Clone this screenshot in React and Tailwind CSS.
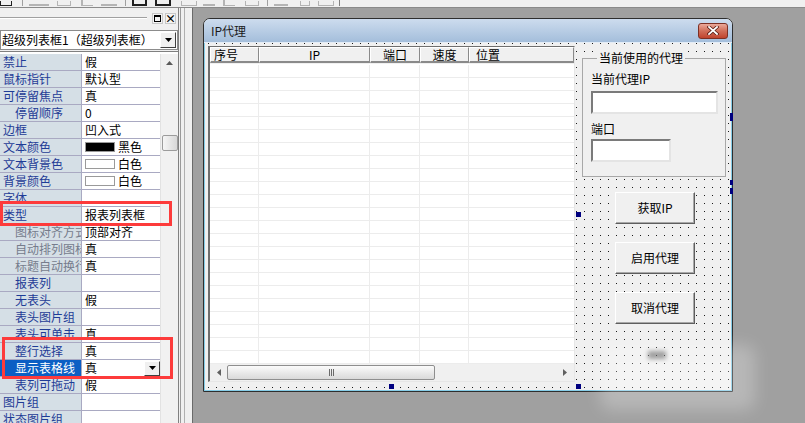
import React from 'react';

const TOOL_MARKS = [
  'ml-0 w-[12px] h-[5px] border-x border-b border-[#202020]',
  'ml-[10px] w-px h-[7px] bg-[#a0a0a0]',
  'ml-[6px] w-[20px] h-[4px] border-b-2 border-[#b4b4b4]',
  'ml-[8px] w-[14px] h-[5px] border-x border-b border-[#b4b4b4]',
  'ml-[10px] w-[12px] h-[6px] border-l-2 border-b border-[#b4b4b4]',
  'ml-[8px] w-[16px] h-[4px] border-b-2 border-[#b4b4b4]',
  'ml-[8px] w-px h-[7px] bg-[#a0a0a0]',
  'ml-[6px] w-[15px] h-[6px] border-x-2 border-b-2 border-[#202020]',
  'ml-[8px] w-[16px] h-[6px] border-x-2 border-b-2 border-[#202020]',
  'ml-[10px] w-[16px] h-[5px] border-x border-b border-[#b4b4b4]',
  'ml-[6px] w-[12px] h-[4px] border-b-2 border-[#b4b4b4]',
  'ml-[8px] w-[12px] h-[6px] border-l-2 border-b border-[#b4b4b4]',
  'ml-[10px] w-[14px] h-[5px] border-x border-b border-[#b4b4b4]',
  'ml-[8px] w-px h-[7px] bg-[#a0a0a0]',
  'ml-[6px] w-[14px] h-[3px] border-b-2 border-[#b4b4b4]',
  'ml-[12px] w-[10px] h-[5px] border-x border-b border-[#b4b4b4]',
  'ml-[8px] w-[16px] h-[5px] border-x border-b border-[#b4b4b4]',
  'ml-[5px] w-px h-[7px] bg-[#808080]',
];

const PROPS = [
  { name: '禁止', value: '假' },
  { name: '鼠标指针', value: '默认型' },
  { name: '可停留焦点', value: '真' },
  { name: '停留顺序', value: '0', sub: true },
  { name: '边框', value: '凹入式' },
  { name: '文本颜色', value: '黑色', swatch: 'bg-black' },
  { name: '文本背景色', value: '白色', swatch: 'bg-white' },
  { name: '背景颜色', value: '白色', swatch: 'bg-white' },
  { name: '字体', value: '' },
  { name: '类型', value: '报表列表框' },
  { name: '图标对齐方式', value: '顶部对齐', sub: true, dim: true },
  { name: '自动排列图标', value: '真', sub: true, dim: true },
  { name: '标题自动换行', value: '真', sub: true, dim: true },
  { name: '报表列', value: '', sub: true },
  { name: '无表头', value: '假', sub: true },
  { name: '表头图片组', value: '', sub: true },
  { name: '表头可单击', value: '真', sub: true },
  { name: '整行选择', value: '真', sub: true },
  { name: '显示表格线', value: '真', sub: true, selected: true },
  { name: '表列可拖动', value: '假', sub: true },
  { name: '图片组', value: '' },
  { name: '状态图片组', value: '' },
];

const COLS = [
  { label: '序号', cls: 'w-[49px] justify-start pl-[3px]' },
  { label: 'IP', cls: 'w-[111px] justify-center' },
  { label: '端口', cls: 'w-[50px] justify-center' },
  { label: '速度', cls: 'w-[49px] justify-center' },
  { label: '位置', cls: 'flex-1 justify-start pl-[6px]' },
];

const ROWS = Array.from({ length: 23 }, (_, i) => i);

const DownTri = () => (
  <svg width="7" height="4" viewBox="0 0 7 4">
    <path d="M0 0 L7 0 L3.5 4 Z" fill="#000" />
  </svg>
);

const DropBtn = ({ className = '' }) => (
  <div
    className={`flex items-center justify-center bg-[#f0f0f0] border border-t-white border-l-white border-r-[#404040] border-b-[#404040] ${className}`}
  >
    <DownTri />
  </div>
);

const Toolbar = () => (
  <div className="flex items-end h-[8px] border-b border-[#8a8a8a] bg-[#f0f0f0] pb-[1px]">
    {TOOL_MARKS.map((c, i) => (
      <div key={i} className={`shrink-0 ${c}`} />
    ))}
  </div>
);

const PropRow = ({ p }) => (
  <div className="flex h-[17px] border-b border-[#a9a9c2]">
    <div
      className={`w-[82px] shrink-0 overflow-hidden whitespace-nowrap border-r border-[#a9a9c2] leading-[16px] ${
        p.sub ? 'pl-[15px]' : 'pl-[3px]'
      } ${p.selected ? 'bg-[#0b5fc4] text-white' : 'bg-[#d5dfe6]'} ${
        p.selected ? '' : p.dim ? 'text-[#767c8c]' : 'text-[#1f3c96]'
      }`}
    >
      {p.name}
    </div>
    <div className="flex-1 flex items-center pl-[3px] bg-white leading-[16px] overflow-hidden whitespace-nowrap">
      {p.swatch && <span className={`w-[30px] h-[10px] mr-[3px] border border-[#9a9a9a] ${p.swatch}`} />}
      <span>{p.value}</span>
      {p.selected && <DropBtn className="ml-auto w-[16px] h-[15px]" />}
    </div>
  </div>
);

const PropertyPanel = () => (
  <div className="w-[179px] shrink-0 flex flex-col border-r border-[#808080]">
    <div className="h-[20px] flex items-center pr-[2px]">
      <div className="flex-1 h-[2px] border-t border-[#a0a0a0] border-b border-b-white mr-[5px]" />
      <div className="w-[11px] h-[11px] flex items-center justify-center border border-[#c8c8c8] bg-[#f4f4f4]">
        <div className="w-[7px] h-[7px] border border-black border-t-2" />
      </div>
      <div className="w-[11px] h-[11px] ml-[2px] flex items-center justify-center border border-[#c8c8c8] bg-[#f4f4f4] font-bold text-[11px] leading-none">
        ×
      </div>
    </div>
    <div className="mt-[2px] h-[20px] flex items-center bg-white border border-[#8c8c8c] pl-[1px]">
      <span className="whitespace-nowrap">超级列表框1（超级列表框）</span>
      <DropBtn className="ml-auto mr-[1px] w-[16px] h-[16px]" />
    </div>
    <div className="mt-px flex flex-1 min-h-0 border-t border-[#808080] pt-[2px] bg-white overflow-hidden">
      <div className="w-[160px] shrink-0 flex flex-col">
        {PROPS.map((p) => (
          <PropRow key={p.name} p={p} />
        ))}
      </div>
      <div className="flex-1 flex flex-col items-center bg-[#f1f1f1] border-l border-[#e2e2e2]">
        <svg className="mt-[7px]" width="7" height="4" viewBox="0 0 7 4">
          <path d="M0 4 L3.5 0 L7 4 Z" fill="#5a5a5a" />
        </svg>
        <div className="mt-[70px] w-[16px] h-[16px] rounded-[2px] border border-[#9c9c9c] bg-gradient-to-r from-[#f6f6f6] to-[#d8d8d8]" />
      </div>
    </div>
  </div>
);

const TextBox = ({ className }) => (
  <div
    className={`h-[23px] bg-white border-2 border-t-[#7a7a7a] border-l-[#7a7a7a] border-b-[#e4e4e4] border-r-[#e4e4e4] ${className}`}
  />
);

const Button = ({ children }) => (
  <div className="w-[80px] h-[32px] flex items-center justify-center bg-[#f0f0f0] border border-t-white border-l-white border-r-[#5e5e5e] border-b-[#5e5e5e] shadow-[inset_-1px_-1px_0_#a8a8a8] text-[12px]">
    {children}
  </div>
);

const ListView = () => (
  <div className="mt-[3px] ml-[3px] w-[367px] h-[336px] shrink-0 flex flex-col bg-white border-t border-l-2 border-[#6e6e6e] border-r border-r-[#e6e6e6] border-b border-b-[#e6e6e6]">
    <div className="flex h-[16px] shrink-0">
      {COLS.map((c) => (
        <div
          key={c.label}
          className={`flex items-center bg-[#f0f0f0] border-t border-l border-white border-r border-r-[#8a8a8a] border-b-2 border-b-[#8a8a8a] ${c.cls}`}
        >
          {c.label}
        </div>
      ))}
    </div>
    <div className="flex-1 min-h-0 overflow-hidden border-t border-[#f0f0f0] pt-px">
      {ROWS.map((r) => (
        <div key={r} className="flex h-[13px] border-b border-[#ececec]">
          <div className="w-[49px] border-r border-[#ececec]" />
          <div className="w-[111px] border-r border-[#ececec]" />
          <div className="w-[50px] border-r border-[#ececec]" />
          <div className="w-[49px] border-r border-[#ececec]" />
          <div className="flex-1" />
        </div>
      ))}
    </div>
    <div className="h-[17px] shrink-0 flex items-center bg-[#f0f0f0]">
      <svg className="ml-[7px]" width="4" height="7" viewBox="0 0 4 7">
        <path d="M4 0 L0 3.5 L4 7 Z" fill="#606060" />
      </svg>
      <div className="ml-[6px] w-[208px] h-[15px] rounded-[2px] border border-[#8e8e8e] bg-gradient-to-b from-[#fbfbfb] to-[#d9d9d9] flex items-center justify-center gap-px">
        <div className="w-px h-[7px] bg-[#6a6a6a]" />
        <div className="w-px h-[7px] bg-[#6a6a6a]" />
        <div className="w-px h-[7px] bg-[#6a6a6a]" />
      </div>
      <svg className="ml-auto mr-[7px]" width="4" height="7" viewBox="0 0 4 7">
        <path d="M0 0 L4 3.5 L0 7 Z" fill="#606060" />
      </svg>
    </div>
  </div>
);

const Dialog = () => (
  <div className="w-[530px] h-[374px] flex flex-col rounded-t-[7px] border border-[#2e2e2e] bg-[#f0f0f0]">
    <div className="h-[24px] shrink-0 flex items-center justify-between pl-[7px] pr-[4px] rounded-t-[6px] bg-gradient-to-b from-[#cddcee] to-[#a4bedb] border-b border-[#e4edf7]">
      <span className="text-[#1a1a1a]">IP代理</span>
      <div className="w-[30px] h-[16px] flex items-center justify-center rounded-[3px] border border-[#7d3024] bg-gradient-to-b from-[#eaa99a] via-[#d06d58] to-[#c0432d]">
        <svg width="12" height="9" viewBox="0 0 12 9">
          <path d="M2 1 L10 8 M10 1 L2 8" stroke="#5a1c12" strokeWidth="3.4" strokeLinecap="square" />
          <path d="M2 1 L10 8 M10 1 L2 8" stroke="#fff" strokeWidth="1.8" strokeLinecap="square" />
        </svg>
      </div>
    </div>
    <div className="flex-1 flex items-start border-x border-b border-[#86cde8] bg-[#f0f0f0] bg-[conic-gradient(from_270deg_at_1px_1px,#1a1a1a_90deg,transparent_0)] bg-size-[8px_8px] bg-position-[3px_0px]">
      <ListView />
      <div className="ml-[7px] mt-[8px] flex flex-col">
        <fieldset className="w-[144px] border border-[#a8a8a8] bg-[#f0f0f0] pl-[8px] pb-[14px]">
          <legend className="ml-[6px] px-[2px] leading-[14px] bg-[#f0f0f0]">当前使用的代理</legend>
          <div className="mt-[7px] leading-[14px]">当前代理IP</div>
          <TextBox className="mt-[5px] w-[127px]" />
          <div className="mt-[8px] leading-[14px]">端口</div>
          <TextBox className="mt-[3px] w-[80px]" />
        </fieldset>
        <div className="ml-[33px] mt-[15px] flex flex-col gap-[18px]">
          <Button>获取IP</Button>
          <Button>启用代理</Button>
          <Button>取消代理</Button>
        </div>
      </div>
    </div>
  </div>
);

export default function App() {
  return (
    <div className="relative w-[805px] h-[423px] overflow-hidden bg-[#f0f0f0] text-[12px] leading-[14px] text-black font-['Noto_Sans_CJK_SC',sans-serif]">
      <Toolbar />
      <div className="flex h-[415px]">
        <PropertyPanel />
        <div className="w-[13px] shrink-0 flex bg-[#f0f0f0]">
          <div className="ml-[1px] w-px bg-[#9a9a9a]" />
          <div className="ml-[3px] w-px bg-[#b0b0b0]" />
        </div>
        <div className="flex-1 bg-[#a0a0a0] border-l border-[#6a6a6a] pl-[10px] pt-[10px]">
          <Dialog />
        </div>
      </div>

      {/* red highlight boxes */}
      <div className="absolute left-0 top-[201px] w-[172px] h-[25px] border-[3px] border-[#fd3b3b]" />
      <div className="absolute left-[2px] top-[337px] w-[171px] h-[42px] border-[3px] border-[#fd3b3b]" />

      {/* selection handles */}
      <div className="absolute left-[576px] top-[212px] w-[5px] h-[5px] bg-[#000080]" />
      <div className="absolute left-[576px] top-[384px] w-[5px] h-[5px] bg-[#000080]" />
      <div className="absolute left-[389px] top-[384px] w-[5px] h-[5px] bg-[#000080]" />
      <div className="absolute left-[730px] top-[113px] w-[3px] h-[8px] bg-[#000080]" />
      <div className="absolute left-[730px] top-[180px] w-[3px] h-[5px] bg-[#000080]" />
      <div className="absolute left-[730px] top-[188px] w-[3px] h-[6px] bg-[#000080]" />

      {/* blurred watermark */}
      <div className="absolute left-[600px] top-[345px] w-[155px] h-[65px] rounded-[10px] bg-white/25 blur-[8px]" />
      <div className="absolute left-[648px] top-[351px] w-[18px] h-[8px] bg-[#505050]/50 blur-[2px]" />
    </div>
  );
}
